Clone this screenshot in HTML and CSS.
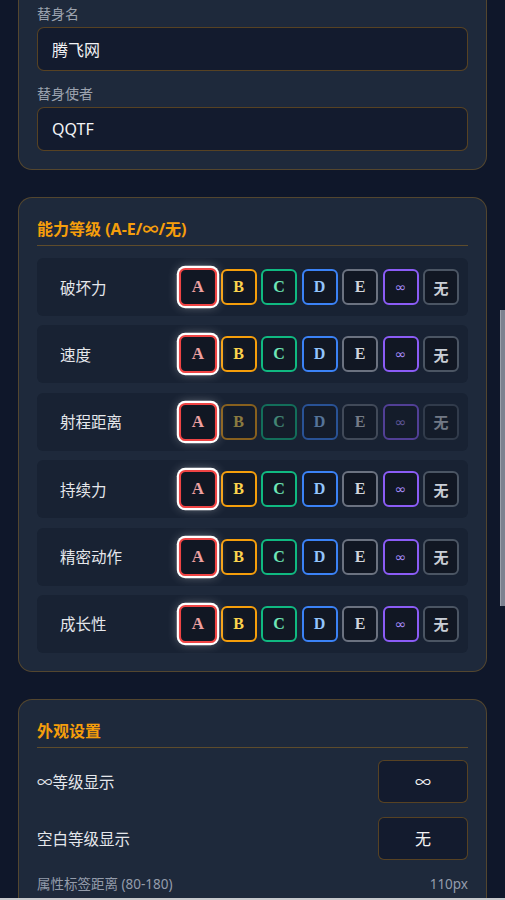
FILE: index.html
```html
<!DOCTYPE html>
<html lang="zh">
<head>
<meta charset="utf-8">
<link rel="stylesheet" href="styles.css">
</head>
<body>
<div class="page">
  <section class="panel panel-cut">
    <div class="field">
      <div class="field-label">替身名</div>
      <div class="input">腾飞网</div>
    </div>
    <div class="field">
      <div class="field-label">替身使者</div>
      <div class="input">QQTF</div>
    </div>
  </section>

  <section class="panel">
    <h2 class="panel-title">能力等级 (A-E/∞/无)</h2>
    <div class="rows">
      <div class="row"><span class="row-label">破坏力</span>
        <div class="grades"><span class="g ga sel">A</span><span class="g gb">B</span><span class="g gc">C</span><span class="g gd">D</span><span class="g ge">E</span><span class="g ginf">∞</span><span class="g gnone">无</span></div></div>
      <div class="row"><span class="row-label">速度</span>
        <div class="grades"><span class="g ga sel">A</span><span class="g gb">B</span><span class="g gc">C</span><span class="g gd">D</span><span class="g ge">E</span><span class="g ginf">∞</span><span class="g gnone">无</span></div></div>
      <div class="row dim"><span class="row-label">射程距离</span>
        <div class="grades"><span class="g ga sel">A</span><span class="g gb">B</span><span class="g gc">C</span><span class="g gd">D</span><span class="g ge">E</span><span class="g ginf">∞</span><span class="g gnone">无</span></div></div>
      <div class="row"><span class="row-label">持续力</span>
        <div class="grades"><span class="g ga sel">A</span><span class="g gb">B</span><span class="g gc">C</span><span class="g gd">D</span><span class="g ge">E</span><span class="g ginf">∞</span><span class="g gnone">无</span></div></div>
      <div class="row"><span class="row-label">精密动作</span>
        <div class="grades"><span class="g ga sel">A</span><span class="g gb">B</span><span class="g gc">C</span><span class="g gd">D</span><span class="g ge">E</span><span class="g ginf">∞</span><span class="g gnone">无</span></div></div>
      <div class="row"><span class="row-label">成长性</span>
        <div class="grades"><span class="g ga sel">A</span><span class="g gb">B</span><span class="g gc">C</span><span class="g gd">D</span><span class="g ge">E</span><span class="g ginf">∞</span><span class="g gnone">无</span></div></div>
    </div>
  </section>

  <section class="panel">
    <h2 class="panel-title">外观设置</h2>
    <div class="setting"><span class="setting-label">∞等级显示</span><span class="setting-box">∞</span></div>
    <div class="setting"><span class="setting-label">空白等级显示</span><span class="setting-box">无</span></div>
    <div class="range-line"><span>属性标签距离 (80-180)</span><span>110px</span></div>
  </section>
</div>
<div class="scroll-thumb"></div>
<div class="bottom-edge"></div>
</body>
</html>
```

FILE: styles.css
```css
* { box-sizing: border-box; }
html, body { margin: 0; padding: 0; }
body {
  background: #0f172a;
  font-family: "Noto Sans", "Noto Sans CJK SC", sans-serif;
  color: #e5e7eb;
  overflow: hidden;
  height: 900px;
}
.page {
  padding: 0 18px;
  display: flex;
  flex-direction: column;
  gap: 27px;
}
.panel {
  background: #1e293b;
  border: 1px solid rgba(245, 158, 11, 0.25);
  border-radius: 14px;
  padding: 18px 18px 18px;
}
.panel-cut {
  border-top: none;
  border-top-left-radius: 0;
  border-top-right-radius: 0;
  padding-top: 4px;
  padding-bottom: 18px;
}
.field + .field { margin-top: 13px; }
.field-label {
  font-size: 14px;
  line-height: 20px;
  color: #9ca3af;
  margin-bottom: 3px;
}
.input {
  height: 44px;
  border: 1px solid rgba(245, 158, 11, 0.3);
  border-radius: 7px;
  background: #131b2e;
  padding: 0 14px;
  display: flex;
  align-items: center;
  font-size: 16px;
  color: #f3f4f6;
}
.panel-title {
  margin: 0 0 12px;
  font-size: 16px;
  line-height: 24px;
  font-weight: 700;
  color: #f59e0b;
  padding: 1px 0 4px;
  border-bottom: 1px solid rgba(245, 158, 11, 0.3);
}
.rows {
  display: flex;
  flex-direction: column;
  gap: 9.4px;
}
.row {
  height: 58px;
  background: #182233;
  border-radius: 6px;
  display: flex;
  align-items: center;
  justify-content: space-between;
  padding: 0 9px 0 23px;
}
.row-label {
  font-size: 15.5px;
  color: #e5e7eb;
}
.grades {
  display: flex;
  gap: 4.5px;
}
.g {
  width: 36px;
  height: 36px;
  border: 2px solid;
  border-radius: 6px;
  background: #111723;
  display: flex;
  align-items: center;
  justify-content: center;
  font-family: "Liberation Serif", serif;
  font-weight: 700;
  font-size: 16px;
}
.ga { border-color: #ef4444; color: #eea0a0; }
.gb { border-color: #f59e0b; color: #fcd34d; }
.gc { border-color: #10b981; color: #6ee7b7; }
.gd { border-color: #3b82f6; color: #93c5fd; }
.ge { border-color: #6b7280; color: #d1d5db; }
.ginf { border-color: #8b5cf6; color: #a78bfa; font-family: "DejaVu Sans", sans-serif; font-weight: 400; font-size: 14px; }
.gnone { border-color: #4b5563; color: #c9ced6; font-family: "Noto Sans CJK SC", sans-serif; font-size: 15px; }
.g.sel {
  transform: scale(1.06);
  box-shadow: 0 0 0 2px #ffffff, 0 0 10px rgba(255, 255, 255, 0.45);
}
.row.dim .g:not(.sel) { opacity: 0.5; }
.setting {
  display: flex;
  align-items: center;
  justify-content: space-between;
}
.setting + .setting { margin-top: 14px; }
.setting-label { font-size: 15.5px; color: #e5e7eb; }
.setting-box {
  width: 90px;
  height: 43px;
  border: 1px solid rgba(245, 158, 11, 0.3);
  border-radius: 6px;
  background: #131b2e;
  display: flex;
  align-items: center;
  justify-content: center;
  font-size: 16px;
  color: #f3f4f6;
}
.range-line {
  margin-top: 14px;
  display: flex;
  justify-content: space-between;
  font-size: 13.5px;
  line-height: 20px;
  color: #949cab;
}
.scroll-thumb {
  position: fixed;
  right: 0;
  top: 310px;
  width: 5px;
  height: 296px;
  background: #7c8290;
  border-left: 1px solid #9aa0ab;
}
.bottom-edge {
  position: fixed;
  left: 0;
  right: 0;
  bottom: 0;
  height: 2px;
  background: #c9cacd;
}
```
